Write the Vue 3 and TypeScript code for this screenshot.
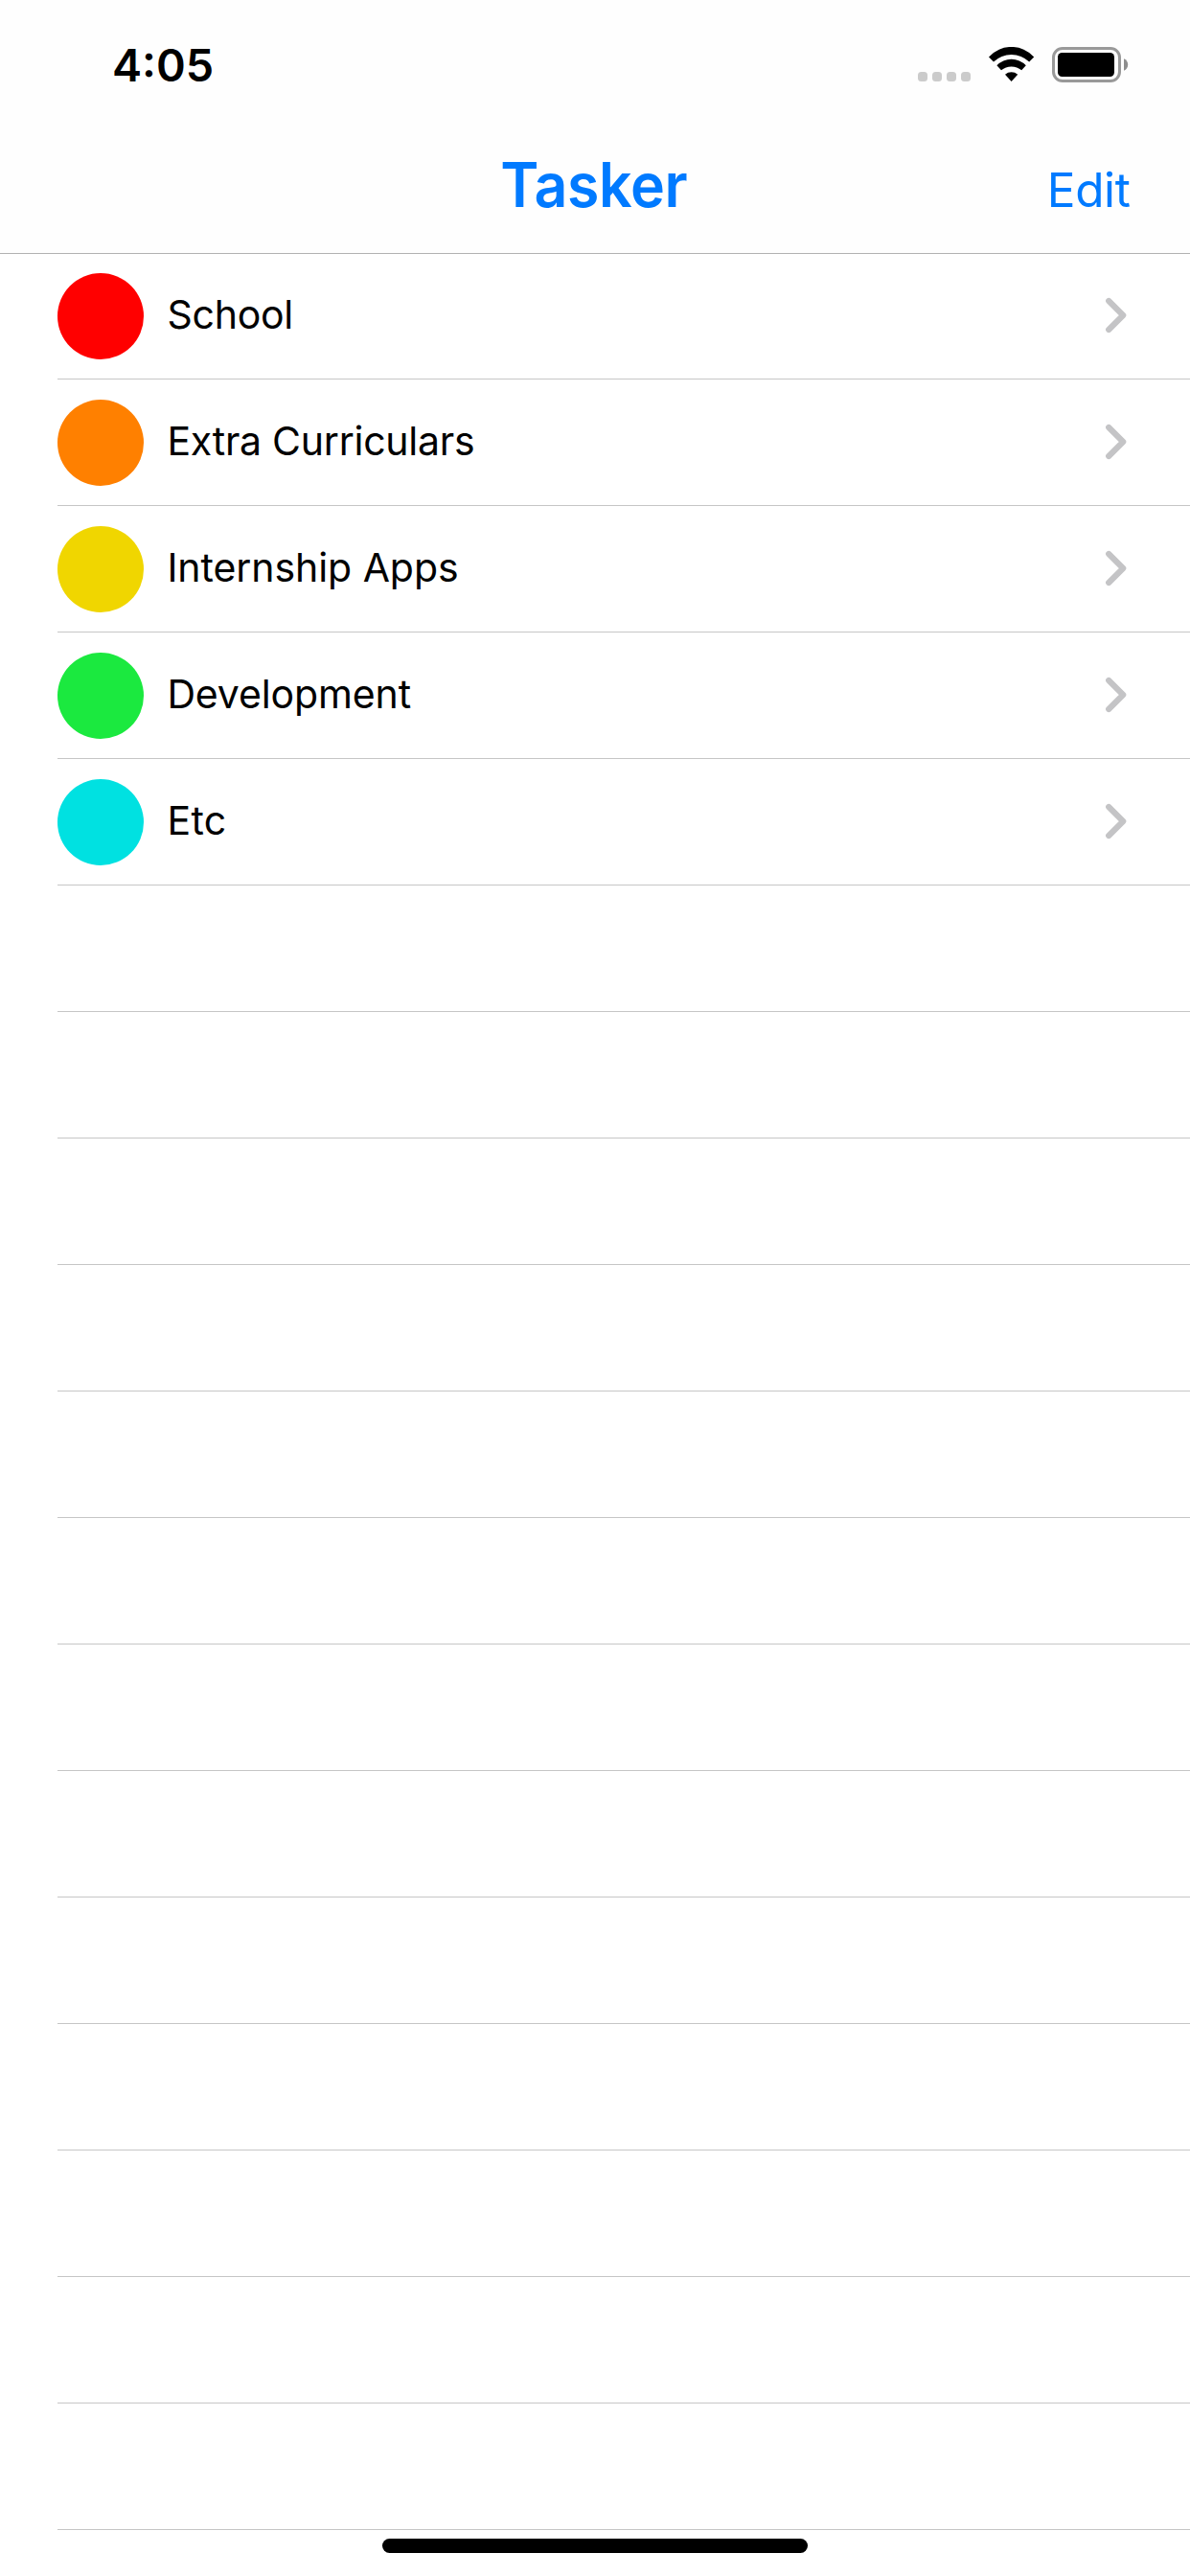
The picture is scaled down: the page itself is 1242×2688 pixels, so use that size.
<script setup lang="ts">
interface Category {
  name: string
  color: string
  tracking: number
}

const categories: Category[] = [
  { name: 'School', color: '#ff0000', tracking: -0.24 },
  { name: 'Extra Curriculars', color: '#ff8000', tracking: -0.25 },
  { name: 'Internship Apps', color: '#f0d600', tracking: -0.06 },
  { name: 'Development', color: '#1be93f', tracking: -0.12 },
  { name: 'Etc', color: '#00e1e1', tracking: 0.4 },
]

const emptyRows = 13
</script>

<template>
  <div class="screen">
    <header class="header">
      <div class="status-bar">
        <span class="time">4:05</span>
        <div class="indicators">
          <svg class="cellular" width="56" height="12" viewBox="0 0 56 12">
            <rect v-for="n in 4" :key="n" :x="(n - 1) * 15" y="1" width="10" height="10" rx="3.5" />
          </svg>
          <svg class="wifi" width="48" height="37" viewBox="0 0 48 37">
            <path d="M0 10.4A31.8 31.8 0 0 1 47.2 10.4L42.2 15.5A26.8 26.8 0 0 0 5 15.5Z" />
            <path d="M8.4 19.3A21 21 0 0 1 38.8 19.3L34.2 24.3A16.7 16.7 0 0 0 13 24.3Z" />
            <path d="M17 28.7A10 10 0 0 1 30.2 28.7L23.6 36Z" />
          </svg>
          <svg class="battery" width="80" height="37" viewBox="0 0 80 37">
            <rect x="1.5" y="1.5" width="69" height="34" rx="9.5" fill="none" stroke="#999" stroke-width="3" />
            <rect x="6" y="6" width="59" height="25" rx="4.5" />
            <path d="M75 12.2C77.6 13.4 79.2 15.8 79.2 18.5S77.6 23.6 75 24.8Z" fill="#8e8e8e" />
          </svg>
        </div>
      </div>
      <nav class="nav-bar">
        <span></span>
        <h1 class="title">Tasker</h1>
        <button class="edit" type="button">Edit</button>
      </nav>
    </header>

    <ul class="list">
      <li v-for="category in categories" :key="category.name" class="row">
        <span class="swatch" :style="{ background: category.color }"></span>
        <span class="name" :style="{ letterSpacing: category.tracking + 'px' }">{{ category.name }}</span>
        <svg class="chevron" width="24" height="38" viewBox="0 0 24 38">
          <path d="M4.2 4L19.2 19L4.2 34" />
        </svg>
      </li>
      <li v-for="n in emptyRows" :key="n" class="row"></li>
    </ul>

    <div class="home-indicator"></div>
  </div>
</template>

<style>
body {
  margin: 0;
  background: #fff;
}
</style>

<style scoped>
.screen {
  position: relative;
  width: 1242px;
  height: 2688px;
  overflow: hidden;
  background: #fff;
  color: #000;
  font-family: Inter, "Liberation Sans", sans-serif;
}

.header {
  box-sizing: border-box;
  height: 265px;
  margin-bottom: -1px;
  background: #fefefe;
  border-bottom: 1px solid #b2b2b2;
}

.status-bar {
  display: flex;
  box-sizing: border-box;
  height: 132px;
  padding: 49px 64px 0 117px;
  justify-content: space-between;
  align-items: flex-start;
}

.time {
  font-size: 46.7px;
  font-weight: 600;
  line-height: 38px;
}

.indicators {
  display: flex;
  align-items: flex-end;
}

.cellular {
  fill: #cbcbcb;
  margin-right: 18px;
}

.wifi {
  margin-right: 18px;
}

.nav-bar {
  display: grid;
  grid-template-columns: 1fr auto 1fr;
  height: 132px;
  align-items: center;
}

.title {
  margin: 0;
  padding: 0 2px 10px 0;
  color: #007aff;
  font-size: 64px;
  font-weight: 600;
  line-height: 80px;
  letter-spacing: -0.4px;
  transform: scaleX(0.95);
}

.edit {
  justify-self: end;
  margin: 0 62.5px 0 0;
  padding: 0;
  border: 0;
  background: none;
  color: #007aff;
  font: 400 49.5px/60px Inter, "Liberation Sans", sans-serif;
  letter-spacing: -0.4px;
}

.list {
  margin: 0;
  padding: 0 0 0 60px;
  list-style: none;
}

.row {
  display: flex;
  box-sizing: border-box;
  height: 132px;
  align-items: center;
  border-bottom: 1px solid #c6c6c6;
}

.swatch {
  width: 90px;
  height: 90px;
  margin-right: 24.4px;
  border-radius: 50%;
}

.name {
  flex: 1;
  padding-bottom: 3px;
  font-size: 41px;
  line-height: 50px;
}

.chevron {
  margin: 0 65px 1px 0;
  fill: none;
  stroke: #c4c4c6;
  stroke-width: 6.2;
  stroke-linecap: round;
  stroke-linejoin: round;
}

.home-indicator {
  position: absolute;
  left: 399px;
  bottom: 24px;
  width: 444px;
  height: 15px;
  border-radius: 7.5px;
  background: #000;
}
</style>
